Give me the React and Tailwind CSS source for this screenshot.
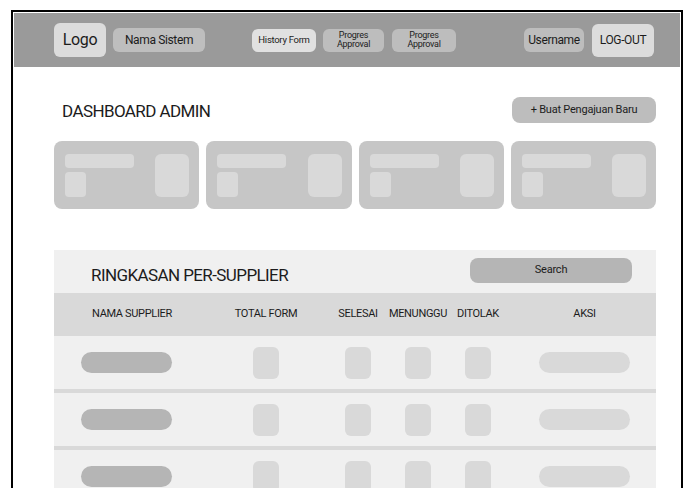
const stats = [1, 2, 3, 4];
const suppliers = [1, 2, 3];

const StatCard = () => (
  <div className="h-[68px] rounded-lg bg-[#c6c6c6] pl-[11px] pr-[10px] pt-[13px] flex justify-between">
    <div className="flex flex-col gap-[4px]">
      <div className="w-[69px] h-[14px] rounded-sm bg-[#d9d9d9]" />
      <div className="w-[21px] h-[25px] rounded-sm bg-[#d9d9d9]" />
    </div>
    <div className="w-[34px] h-[43px] rounded-md bg-[#d9d9d9]" />
  </div>
);

const SupplierRow = () => (
  <div className="grid grid-cols-[144px_136px_48px_72px_48px_1fr] h-[53px] box-content border-b-4 border-[#d9d9d9] items-center">
    <div className="flex justify-center">
      <div className="w-[91px] h-[21px] rounded-full bg-[#b5b5b5]" />
    </div>
    <div className="flex justify-center">
      <div className="w-[26px] h-[32px] rounded-md bg-[#d9d9d9]" />
    </div>
    <div className="flex justify-center">
      <div className="w-[26px] h-[32px] rounded-md bg-[#d9d9d9]" />
    </div>
    <div className="flex justify-center">
      <div className="w-[26px] h-[32px] rounded-md bg-[#d9d9d9]" />
    </div>
    <div className="flex justify-center">
      <div className="w-[26px] h-[32px] rounded-md bg-[#d9d9d9]" />
    </div>
    <div className="flex justify-center pl-[11px]">
      <div className="w-[91px] h-[21px] rounded-full bg-[#d9d9d9]" />
    </div>
  </div>
);

export default function App() {
  return (
    <div className="min-h-screen bg-white pt-[10px] pl-[11px] font-['Roboto',sans-serif] text-[#1c1c1c] overflow-hidden">
      <div className="w-[672px] border-2 border-b-0 border-black p-[1px] pb-0">
        {/* top navigation */}
        <nav className="h-[54px] bg-[#9a9a9a] flex items-center">
          <div className="ml-[40px] w-[52px] h-[34px] rounded-md bg-[#dcdcdc] flex items-center justify-center text-[16px] tracking-[-0.02em]">
            Logo
          </div>
          <div className="ml-[7px] w-[92px] h-[24px] rounded-md bg-[#bebebe] flex items-center justify-center text-[12px] tracking-[-0.03em]">
            Nama Sistem
          </div>
          <div className="ml-[47px] w-[64px] h-[23px] rounded-md bg-[#e1e1e1] flex items-center justify-center text-[9.5px] tracking-[-0.03em]">
            History Form
          </div>
          <div className="ml-[7px] w-[61px] h-[23px] rounded-md bg-[#bdbdbd] flex flex-col items-center justify-center text-[9px] leading-[9px] tracking-[-0.03em]">
            <span>Progres</span>
            <span>Approval</span>
          </div>
          <div className="ml-[8px] w-[64px] h-[23px] rounded-md bg-[#bdbdbd] flex flex-col items-center justify-center text-[9px] leading-[9px] tracking-[-0.03em]">
            <span>Progres</span>
            <span>Approval</span>
          </div>
          <div className="ml-[68px] w-[60px] h-[24px] rounded-md bg-[#bdbdbd] flex items-center justify-center text-[12px] tracking-[-0.03em]">
            Username
          </div>
          <div className="ml-[8px] w-[62px] h-[33px] rounded-md bg-[#dcdcdc] flex items-center justify-center text-[12px] tracking-[-0.03em]">
            LOG-OUT
          </div>
        </nav>

        <main className="ml-[40px] w-[602px]">
          {/* page heading */}
          <div className="mt-[30px] h-[26px] flex items-center justify-between">
            <h1 className="pl-[8px] pt-[3px] text-[17px] tracking-[-0.035em]">DASHBOARD ADMIN</h1>
            <button className="w-[144px] h-[26px] rounded-lg bg-[#bdbdbd] text-[11px] tracking-[-0.02em]">
              + Buat Pengajuan Baru
            </button>
          </div>

          {/* stat cards */}
          <div className="mt-[18px] grid grid-cols-4 gap-[7px]">
            {stats.map((s) => (
              <StatCard key={s} />
            ))}
          </div>

          {/* supplier summary */}
          <section className="mt-[41px] bg-[#f0f0f0]">
            <div className="h-[43px] flex items-start justify-between pl-[37px] pr-[24px]">
              <h2 className="pt-[14px] text-[17px] leading-[22px] tracking-[-0.035em]">RINGKASAN PER-SUPPLIER</h2>
              <div className="mt-[8px] w-[162px] h-[25px] rounded-lg bg-[#b5b5b5] flex items-center justify-center text-[11px] tracking-[-0.02em]">
                Search
              </div>
            </div>

            <div className="grid grid-cols-[144px_136px_48px_72px_48px_1fr] h-[43px] bg-[#d9d9d9] items-center text-[11px] tracking-[-0.03em] text-center">
              <div className="pl-[12px]">NAMA SUPPLIER</div>
              <div>TOTAL FORM</div>
              <div>SELESAI</div>
              <div>MENUNGGU</div>
              <div>DITOLAK</div>
              <div className="pl-[11px]">AKSI</div>
            </div>

            {suppliers.map((s) => (
              <SupplierRow key={s} />
            ))}
          </section>
        </main>
      </div>
    </div>
  );
}
